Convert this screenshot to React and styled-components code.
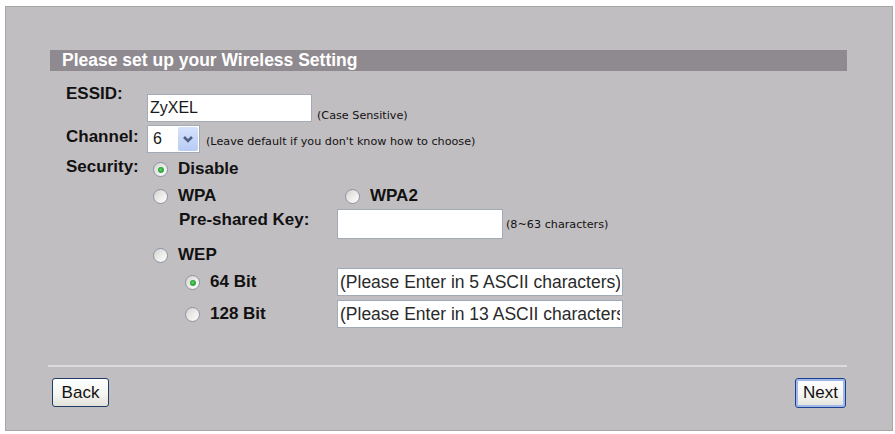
import { styled, createGlobalStyle, css } from "styled-components";

const GlobalStyle = createGlobalStyle`
  body {
    margin: 0;
    background: #ffffff;
    font-family: "Liberation Sans", Arial, sans-serif;
  }
`;

function RadioOption({ checked, children, width }) {
  return (
    <Option $width={width}>
      <Radio $checked={checked} />
      <span>{children}</span>
    </Option>
  );
}

export default function App() {
  return (
    <>
      <GlobalStyle />
      <Panel>
        <Header>Please set up your Wireless Setting</Header>
        <Form>
          <EssidRow>
            <Label>ESSID:</Label>
            <TextBox defaultValue="ZyXEL" $width={165} $height={28} $drop />
            <Hint $top={25} $left={5}>(Case Sensitive)</Hint>
          </EssidRow>

          <ChannelRow>
            <Label $top={2}>Channel:</Label>
            <Select>
              <SelectValue>6</SelectValue>
              <SelectArrow>
                <svg width="20" height="24" viewBox="0 0 20 24">
                  <polyline
                    points="6,10 10,14 14,10"
                    fill="none"
                    stroke="#4d6185"
                    strokeWidth="2.6"
                  />
                </svg>
              </SelectArrow>
            </Select>
            <Hint $top={10} $left={6}>
              (Leave default if you don't know how to choose)
            </Hint>
          </ChannelRow>

          <SecurityRow>
            <Label>Security:</Label>
            <Options>
              <OptionLine $top={2}>
                <RadioOption checked>Disable</RadioOption>
              </OptionLine>
              <OptionLine $top={7}>
                <RadioOption width={192}>WPA</RadioOption>
                <RadioOption>WPA2</RadioOption>
              </OptionLine>
              <KeyLine>
                <KeyLabel>Pre-shared Key:</KeyLabel>
                <TextBox $width={166} $height={30} />
                <Hint $top={9} $left={3}>(8~63 characters)</Hint>
              </KeyLine>
              <OptionLine $top={6}>
                <RadioOption>WEP</RadioOption>
              </OptionLine>
              <WepLine $top={3}>
                <RadioOption checked width={152}>64 Bit</RadioOption>
                <TextBox
                  $width={286}
                  $height={28}
                  $large
                  defaultValue="(Please Enter in 5 ASCII characters)"
                />
              </WepLine>
              <WepLine $top={4}>
                <RadioOption width={152}>128 Bit</RadioOption>
                <TextBox
                  $width={286}
                  $height={28}
                  $large
                  defaultValue="(Please Enter in 13 ASCII characters)"
                />
              </WepLine>
            </Options>
          </SecurityRow>
        </Form>

        <Separator />
        <Buttons>
          <Button $width={57}>Back</Button>
          <Button $width={51} $default>
            Next
          </Button>
        </Buttons>
      </Panel>
    </>
  );
}

const Panel = styled.div`
  box-sizing: border-box;
  margin: 6px 0 0 5px;
  width: 888px;
  height: 425px;
  background: #c1bec2;
  border: 1px solid #a9a6aa;
  padding: 43px 44px 0 44px;
  display: flex;
  flex-direction: column;
`;

const Header = styled.div`
  height: 21px;
  width: 797px;
  background: #8f8a8f;
  color: #ffffff;
  font-weight: 700;
  font-size: 17.5px;
  line-height: 21px;
  padding-left: 12px;
  box-sizing: border-box;
  white-space: nowrap;
`;

const Form = styled.div`
  margin-top: 13px;
  padding-left: 16px;
  display: flex;
  flex-direction: column;
`;

const EssidRow = styled.div`
  display: flex;
  align-items: flex-start;
  height: 38px;
`;

const ChannelRow = styled.div`
  display: flex;
  align-items: flex-start;
  height: 28px;
  margin-top: 3px;
`;

const SecurityRow = styled.div`
  display: flex;
  align-items: flex-start;
  margin-top: 4px;
`;

const Label = styled.div`
  width: 81px;
  flex-shrink: 0;
  margin-top: ${(p) => p.$top || 0}px;
  font-weight: 700;
  font-size: 17px;
  line-height: 20px;
  color: #111;
`;

const TextBox = styled.input`
  box-sizing: border-box;
  width: ${(p) => p.$width}px;
  height: ${(p) => p.$height}px;
  margin-top: ${(p) => (p.$drop ? 10 : 0)}px;
  flex-shrink: 0;
  border: 1px solid #a3abb6;
  background: #ffffff;
  padding: 0 2px;
  font-family: "Liberation Sans", Arial, sans-serif;
  font-size: ${(p) => (p.$large ? 17.5 : 16)}px;
  color: ${(p) => (p.$large ? "#2a2a2a" : "#1a1a1a")};
  outline: none;
`;

const Hint = styled.span`
  margin: ${(p) => p.$top}px 0 0 ${(p) => p.$left}px;
  font-family: "DejaVu Sans", Verdana, sans-serif;
  font-size: 11.2px;
  line-height: 13px;
  color: #111;
  white-space: nowrap;
`;

const Select = styled.div`
  box-sizing: border-box;
  display: flex;
  width: 53px;
  height: 28px;
  border: 1px solid #a3abb6;
  background: #ffffff;
`;

const SelectValue = styled.span`
  flex: 1;
  padding-left: 5px;
  font-size: 16px;
  line-height: 26px;
  color: #1a1a1a;
`;

const SelectArrow = styled.span`
  display: flex;
  align-items: center;
  justify-content: center;
  width: 20px;
  margin: 1px;
  border-radius: 2px;
  background: linear-gradient(#d6e2fc, #b8cbf4);
`;

const Options = styled.div`
  display: flex;
  flex-direction: column;
`;

const OptionLine = styled.div`
  display: flex;
  align-items: center;
  height: 20px;
  margin-top: ${(p) => p.$top}px;
  padding-left: 6px;
`;

const Option = styled.div`
  display: flex;
  align-items: center;
  gap: 10px;
  width: ${(p) => (p.$width ? `${p.$width}px` : "auto")};
  flex-shrink: 0;
  font-weight: 700;
  font-size: 17px;
  line-height: 20px;
  color: #111;
`;

const Radio = styled.span`
  position: relative;
  box-sizing: border-box;
  width: 15px;
  height: 15px;
  margin-top: 1px;
  border-radius: 50%;
  border: 1px solid #8a95a5;
  background: linear-gradient(135deg, #d2d2ce 0%, #ecebe8 50%, #ffffff 100%);
  ${(p) =>
    p.$checked &&
    css`
      &::after {
        content: "";
        position: absolute;
        left: 3.5px;
        top: 3.5px;
        width: 6px;
        height: 6px;
        border-radius: 50%;
        background: radial-gradient(circle at 45% 45%, #6bd86b 0%, #22a030 55%, #a8dca8 100%);
      }
    `}
`;

const KeyLine = styled.div`
  display: flex;
  align-items: flex-start;
  height: 30px;
  margin-top: 3px;
  padding-left: 32px;
`;

const KeyLabel = styled.div`
  width: 158px;
  flex-shrink: 0;
  margin-top: 1px;
  font-weight: 700;
  font-size: 17px;
  line-height: 20px;
  color: #111;
`;

const WepLine = styled.div`
  display: flex;
  align-items: center;
  height: 28px;
  margin-top: ${(p) => p.$top}px;
  padding-left: 38px;
`;

const Separator = styled.div`
  margin-top: 37px;
  margin-left: -2px;
  width: 799px;
  height: 2px;
  background: #dedbdf;
`;

const Buttons = styled.div`
  display: flex;
  justify-content: space-between;
  align-items: flex-start;
  margin-top: 11px;
  width: 797px;
  padding: 0 1px 0 2px;
  box-sizing: border-box;
`;

const Button = styled.button`
  box-sizing: border-box;
  width: ${(p) => p.$width}px;
  height: ${(p) => (p.$default ? 30 : 29)}px;
  padding: 0;
  border: 1px solid #203d66;
  border-radius: 3px;
  background: linear-gradient(#ffffff, #f4f4f0 60%, #e2e1da);
  font-family: "Liberation Sans", Arial, sans-serif;
  font-size: 17px;
  color: #111;
  ${(p) =>
    p.$default &&
    css`
      border-color: #1d3f8c;
      box-shadow: inset 0 0 0 2px #9fb8ec;
    `}
`;
